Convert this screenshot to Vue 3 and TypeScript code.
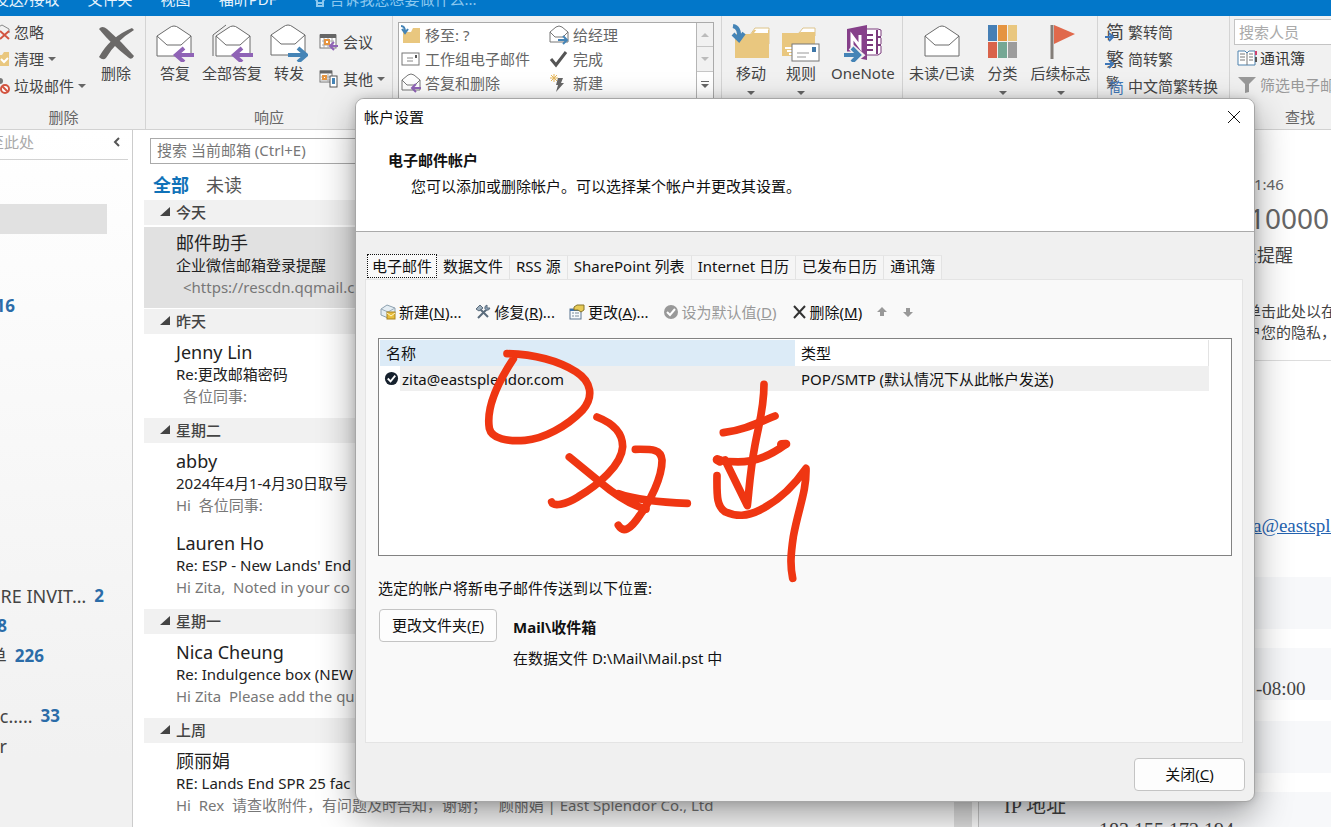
<script setup lang="ts">
interface Mail { from: string; subject: string; preview: string; selected?: boolean; indent?: boolean }
interface Day { label: string; mails: Mail[] }
interface Folder { name: string; count: string; end: number; kind: string }

const days: Day[] = [
  { label: '今天', mails: [{ from: '邮件助手', subject: '企业微信邮箱登录提醒', preview: '<https://rescdn.qqmail.com', selected: true, indent: true }] },
  { label: '昨天', mails: [{ from: 'Jenny Lin', subject: 'Re:更改邮箱密码', preview: '各位同事:', indent: true }] },
  {
    label: '星期二',
    mails: [
      { from: 'abby', subject: '2024年4月1-4月30日取号', preview: 'Hi  各位同事:' },
      { from: 'Lauren Ho', subject: "Re: ESP - New Lands' End", preview: 'Hi Zita,  Noted in your co' },
    ],
  },
  { label: '星期一', mails: [{ from: 'Nica Cheung', subject: 'Re: Indulgence box (NEW', preview: 'Hi Zita  Please add the qu' }] },
  { label: '上周', mails: [{ from: '顾丽娟', subject: 'RE: Lands End SPR 25 fac', preview: 'Hi  Rex  请查收附件，有问题及时告知，谢谢；   顾丽娟 | East Splendor Co., Ltd' }] },
]

const folders: Folder[] = [
  { name: '', count: '', end: 107, kind: 'current' },
  { name: '', count: '16', end: 15, kind: 'second' },
  { name: 'RE INVIT…', count: '2', end: 104, kind: 'third' },
  { name: '', count: '8', end: 7, kind: '' },
  { name: '单', count: '226', end: 44, kind: '' },
  { name: '', count: '', end: 44, kind: '' },
  { name: 'tc.....', count: '33', end: 60, kind: '' },
  { name: 'r', count: '', end: 7, kind: '' },
]

const tabs: string[] = ['电子邮件', '数据文件', 'RSS 源', 'SharePoint 列表', 'Internet 日历', '已发布日历', '通讯簿']

const tools = [
  { icon: 'i-new', text: '新建', key: 'N', dots: '...', off: false },
  { icon: 'i-repair', text: '修复', key: 'R', dots: '...', off: false },
  { icon: 'i-change', text: '更改', key: 'A', dots: '...', off: false },
  { icon: 'i-default', text: '设为默认值', key: 'D', dots: '', off: true },
  { icon: 'i-remove', text: '删除', key: 'M', dots: '', off: false },
]

const steps = [
  { icon: 'i-moveto', text: '移至: ?' },
  { icon: 'i-tomanager', text: '给经理' },
  { icon: 'i-team', text: '工作组电子邮件' },
  { icon: 'i-done', text: '完成' },
  { icon: 'i-replydel', text: '答复和删除' },
  { icon: 'i-create', text: '新建' },
]
</script>

<template>
  <div class="app">
    <svg class="defs" aria-hidden="true">
      <symbol id="i-env" viewBox="0 0 36 32">
        <path d="M1 31V11L13 3Q18 -1 23 3L35 11V31Z" fill="#fff" stroke="#6b6b6b" />
        <path d="M1 11L11 20H25L35 11" fill="none" stroke="#6b6b6b" />
      </symbol>
      <symbol id="i-env-small" viewBox="0 0 20 18">
        <path d="M1 17V7L7 2Q10 0 13 2L19 7V17Z" fill="#fff" stroke="#777" />
        <path d="M1 7L6 12H14L19 7" fill="none" stroke="#777" />
      </symbol>
      <symbol id="i-reply" viewBox="0 0 38 38">
        <use href="#i-env" x="0" y="1" width="36" height="32" />
        <path d="M38 31H22" stroke="#8f63b6" stroke-width="4" />
        <path d="M28 24L20 31L28 38" fill="none" stroke="#8f63b6" stroke-width="4" />
      </symbol>
      <symbol id="i-replyall" viewBox="0 0 42 38">
        <path d="M2 32V11L15 1" fill="none" stroke="#6b6b6b" />
        <use href="#i-env" x="4" y="1" width="36" height="32" />
        <path d="M42 31H25" stroke="#8f63b6" stroke-width="4" />
        <path d="M31 24L23 31L31 38" fill="none" stroke="#8f63b6" stroke-width="4" />
      </symbol>
      <symbol id="i-forward" viewBox="0 0 38 38">
        <use href="#i-env" x="0" y="0" width="36" height="32" />
        <path d="M18 31H35" stroke="#4584b6" stroke-width="4" />
        <path d="M28 24L36 31L28 38" fill="none" stroke="#4584b6" stroke-width="4" />
      </symbol>
      <symbol id="i-x" viewBox="0 0 38 36">
        <path d="M2 4Q5 0 10 4Q24 16 37 31Q35 35 32 33Q15 20 2 4Z" fill="#6b6968" />
        <path d="M37 5Q20 15 9 33Q6 36 2 32Q13 12 35 3Z" fill="#6b6968" />
      </symbol>
      <symbol id="i-folder" viewBox="0 0 40 38">
        <path d="M19 11L24 4H38V20" fill="#fffdf4" stroke="#ddc48c" />
        <path d="M4 10H20L23 6H38V34H4Z" fill="#e9c77f" />
        <path d="M23 9L26 5H37V9Z" fill="#fff" />
      </symbol>
      <symbol id="i-move" viewBox="0 0 40 38">
        <use href="#i-folder" width="40" height="38" />
        <path d="M2 2Q9 3 8 15" fill="none" stroke="#4584b6" stroke-width="4" />
        <path d="M2 10L8 16L13 9" fill="none" stroke="#4584b6" stroke-width="4" />
      </symbol>
      <symbol id="i-rules" viewBox="0 0 40 38">
        <path d="M18 9L22 4H34V12" fill="#fff" stroke="#ddc48c" />
        <path d="M1 9H17L20 8H34V32H1Z" fill="#e9c77f" />
        <path d="M4 24h7M6 27h5M8 30h3" stroke="#fff" stroke-width="2" />
        <rect x="11" y="20" width="27" height="17" fill="#fff" stroke="#777" />
        <path d="M16 29h12M16 33h9" stroke="#999" />
        <rect x="31" y="23" width="4" height="5" fill="#3f77a8" />
      </symbol>
      <symbol id="i-onenote" viewBox="0 0 40 38">
        <path d="M20 5H35L38 6V12L37 13L38 14V20L37 21L38 22V29L35 31H20Z" fill="#fff" stroke="#7b3a7c" />
        <path d="M22 11h8M22 16h8M22 21h8M22 26h8M34 6v24M34 13h4M34 21h4" stroke="#7b3a7c" stroke-width="2" />
        <path d="M4 5L24 1V36L4 32Z" fill="#86408a" />
        <path d="M9 24V12L17 23V11" fill="none" stroke="#fff" stroke-width="3" />
        <path d="M1 31H15M8 23L17 31L8 38" fill="none" stroke="#f1f1f1" stroke-width="7" />
        <path d="M1 31H14M9 24L16 31L9 38" fill="none" stroke="#4584b6" stroke-width="4" />
      </symbol>
      <symbol id="i-unread" viewBox="0 0 38 38"><use href="#i-env" x="1" y="1" width="36" height="32" /></symbol>
      <symbol id="i-cats" viewBox="0 0 38 38">
        <rect x="4" y="1" width="9" height="16" fill="#467fb5" /><rect x="14" y="1" width="9" height="16" fill="#e59440" /><rect x="24" y="1" width="9" height="16" fill="#e9c77f" />
        <rect x="4" y="18" width="9" height="16" fill="#d9634a" /><rect x="14" y="18" width="9" height="16" fill="#75a794" /><rect x="24" y="18" width="9" height="16" fill="#9c9c9c" />
      </symbol>
      <symbol id="i-flag" viewBox="0 0 38 38"><path d="M10 1V35" stroke="#837d78" stroke-width="3" /><path d="M12 1L33 10L12 20Z" fill="#e0694c" /></symbol>
      <symbol id="i-ignore" viewBox="0 0 16 16"><path d="M1 5L8 1L15 5V9M3 4V14" fill="none" stroke="#888" /><path d="M6 7L15 15M15 7L6 15" stroke="#d25440" stroke-width="2" /></symbol>
      <symbol id="i-clean" viewBox="0 0 16 16"><path d="M2 4H8L10 1H15V15H2Z" fill="#e9c77f" /><path d="M7 8L10 11L14 7" fill="none" stroke="#fff" stroke-width="2" /></symbol>
      <symbol id="i-junk" viewBox="0 0 16 18"><circle cx="6" cy="4" r="3" fill="#777" /><circle cx="11" cy="12" r="4" fill="#fff" stroke="#d25440" stroke-width="2" /><path d="M8 9L14 15" stroke="#d25440" stroke-width="2" /></symbol>
      <symbol id="i-meet" viewBox="0 0 20 18">
        <rect x="1" y="2" width="16" height="13" fill="#fff" stroke="#777" /><path d="M1 3H17" stroke="#666" stroke-width="4" /><path d="M3 8H15M3 12H15M5 5V15M9 5V15M13 5V15" stroke="#aaa" /><rect x="6" y="7" width="4" height="4" fill="#fff" stroke="#e59440" stroke-width="2" />
        <path d="M19 13H12M15 9L11 13L15 17" fill="none" stroke="#8f63b6" stroke-width="2" />
      </symbol>
      <symbol id="i-other" viewBox="0 0 20 18">
        <rect x="1" y="1" width="12" height="11" fill="#fff" stroke="#777" /><path d="M1 2H13" stroke="#666" stroke-width="3" /><path d="M2 7H12M2 10H12M9 4V12" stroke="#aaa" /><rect x="4" y="6" width="3" height="3" fill="#fff" stroke="#e59440" stroke-width="2" />
        <rect x="11" y="6" width="7" height="11" fill="#fff" stroke="#555" /><rect x="13" y="8" width="3" height="6" fill="#4584b6" />
      </symbol>
      <symbol id="i-moveto" viewBox="0 0 20 20"><path d="M2 7H10L12 3H19V18H2Z" fill="#e9c77f" /><path d="M0 1Q4 1 4 7M1 4L4 8L7 4" fill="none" stroke="#4584b6" stroke-width="2" /></symbol>
      <symbol id="i-team" viewBox="0 0 20 20"><rect x="1" y="4" width="17" height="12" fill="#fff" stroke="#777" /><path d="M6 9h6M6 12h6" stroke="#888" /><path d="M14 6h2v3h-2z" fill="#555" /></symbol>
      <symbol id="i-replydel" viewBox="0 0 20 20"><use href="#i-env-small" x="0" y="0" width="20" height="18" /><path d="M20 15H12M15 11L11 15L15 19" fill="none" stroke="#8f63b6" stroke-width="2" /></symbol>
      <symbol id="i-tomanager" viewBox="0 0 20 20"><use href="#i-env-small" x="0" y="0" width="20" height="18" /><path d="M9 15H17M14 11L18 15L14 19" fill="none" stroke="#4584b6" stroke-width="2" /></symbol>
      <symbol id="i-done" viewBox="0 0 20 20"><path d="M2 10L7 16L17 3" fill="none" stroke="#555" stroke-width="3" /></symbol>
      <symbol id="i-create" viewBox="0 0 20 20"><path d="M5 1V9M1 5H9M2 2L8 8M8 2L2 8" stroke="#e5b65a" /><path d="M9 5H14L12 10H15L7 19L9 12H7Z" fill="#666" /></symbol>
      <symbol id="i-book" viewBox="0 0 20 18"><path d="M1 2H8L10 4L12 2H18V16H1Z" fill="#fff" stroke="#4d81ad" /><path d="M3 5h5M3 8h5M3 11h5M12 5h4M12 8h4M12 11h4M10 4V16" stroke="#777" /><path d="M19 2v4" stroke="#d04070" stroke-width="2" /><path d="M19 8v5" stroke="#555" stroke-width="2" /></symbol>
      <symbol id="i-filter" viewBox="0 0 20 18"><path d="M1 1H19L12 8V16L8 17V8Z" fill="#999" /></symbol>
      <symbol id="i-new" viewBox="0 0 16 16"><path d="M1 5L7 1L15 4V9L8 14L1 11Z" fill="#e4edf3" stroke="#8da1b0" /><path d="M1 5L8 8L15 4M8 8V14" fill="none" stroke="#9babb8" /><rect x="7" y="8" width="8" height="7" fill="#e8bd3c" stroke="#a98321" /><path d="M7 9L11 12L15 9" fill="none" stroke="#fff5c7" /></symbol>
      <symbol id="i-repair" viewBox="0 0 16 16"><path d="M3 14L12 5M5 5L13 13" stroke="#5b6c7c" stroke-width="2" /><path d="M1 5L5 1L8 4L4 7Z" fill="#9eafbd" stroke="#5b6c7c" /><path d="M10 5Q9 2 12 1L12 4L15 4Q14 7 11 6" fill="#8fa6bd" stroke="#5b6c7c" /></symbol>
      <symbol id="i-change" viewBox="0 0 16 16"><rect x="1" y="5" width="11" height="10" fill="#f6fafc" stroke="#5a7590" /><path d="M1 6H12" stroke="#3e73ad" stroke-width="2" /><path d="M3 9h2M3 12h2M6 9h4M6 12h4" stroke="#7a8c9b" /><path d="M5 3L8 1H15V6L12 8L9 6H5Z" fill="#e7ca55" stroke="#86752c" /></symbol>
      <symbol id="i-default" viewBox="0 0 16 16"><circle cx="8" cy="8" r="7" fill="#999" /><path d="M4 8L7 11L12 5" fill="none" stroke="#fff" stroke-width="2" /></symbol>
      <symbol id="i-remove" viewBox="0 0 16 16"><path d="M3 2L14 14M14 2L3 14" stroke="#333" stroke-width="2" /></symbol>
    </svg>

    <nav class="menu">
      <a href="#">发送/接收</a><a href="#">文件夹</a><a href="#">视图</a><a href="#">福昕PDF</a>
      <a href="#" class="tell">
        <svg width="12" height="20" viewBox="0 0 12 20"><path d="M3 12Q1 10 1 7A5 5 0 0 1 11 7Q11 10 9 12V17H3ZM3 14H9" fill="none" stroke="#8cc8ef" stroke-width="2" /></svg>告诉我您想要做什么...
      </a>
    </nav>

    <header class="ribbon">
      <section class="group g-del">
        <div class="tools">
          <div class="stack">
            <button class="small"><svg width="16" height="16"><use href="#i-ignore" /></svg>忽略</button>
            <button class="small"><svg width="16" height="16"><use href="#i-clean" /></svg>清理<i class="caret"></i></button>
            <button class="small"><svg width="16" height="18"><use href="#i-junk" /></svg>垃圾邮件<i class="caret"></i></button>
          </div>
          <button class="big"><svg width="38" height="36"><use href="#i-x" /></svg>删除</button>
        </div>
        <h2>删除</h2>
      </section>
      <section class="group g-resp">
        <div class="tools">
          <button class="big"><svg width="38" height="38"><use href="#i-reply" /></svg>答复</button>
          <button class="big"><svg width="42" height="38"><use href="#i-replyall" /></svg>全部答复</button>
          <button class="big"><svg width="38" height="38"><use href="#i-forward" /></svg>转发</button>
          <div class="stack two">
            <button class="small"><svg width="20" height="18"><use href="#i-meet" /></svg>会议</button>
            <button class="small"><svg width="20" height="18"><use href="#i-other" /></svg>其他<i class="caret"></i></button>
          </div>
        </div>
        <h2>响应</h2>
      </section>
      <section class="group g-steps">
        <div class="steps">
          <div class="step-grid">
            <button v-for="s in steps" :key="s.text" class="small"><svg width="20" height="20"><use :href="'#' + s.icon" /></svg>{{ s.text }}</button>
          </div>
          <div class="spin">
            <button aria-label="上一行"><i class="caret up"></i></button>
            <button aria-label="下一行"><i class="caret pale"></i></button>
            <button aria-label="更多" class="more"><i class="caret"></i></button>
          </div>
        </div>
      </section>
      <section class="group g-move">
        <div class="tools">
          <button class="big"><svg width="40" height="38"><use href="#i-move" /></svg>移动<i class="caret"></i></button>
          <button class="big"><svg width="40" height="38"><use href="#i-rules" /></svg>规则<i class="caret"></i></button>
          <button class="big"><svg width="40" height="38"><use href="#i-onenote" /></svg>OneNote</button>
        </div>
      </section>
      <section class="group g-tags">
        <div class="tools">
          <button class="big"><svg width="38" height="38"><use href="#i-unread" /></svg>未读/已读</button>
          <button class="big"><svg width="38" height="38"><use href="#i-cats" /></svg>分类<i class="caret"></i></button>
          <button class="big"><svg width="38" height="38"><use href="#i-flag" /></svg>后续标志<i class="caret"></i></button>
        </div>
      </section>
      <section class="group g-conv">
        <div class="stack">
          <button class="small"><span class="han">简<svg width="10" height="9" viewBox="0 0 10 9"><path d="M0 4H8M4 0L8 4L4 8" fill="none" stroke="#3f77b8" stroke-width="2" /></svg></span>繁转简</button>
          <button class="small"><span class="han">繁<svg width="10" height="9" viewBox="0 0 10 9"><path d="M0 4H8M4 0L8 4L4 8" fill="none" stroke="#3f77b8" stroke-width="2" /></svg></span>简转繁</button>
          <button class="small"><span class="han pair"><i>繁</i><b>简</b></span>中文简繁转换</button>
        </div>
      </section>
      <section class="group g-find">
        <div class="stack">
          <input type="text" placeholder="搜索人员" aria-label="搜索人员" />
          <button class="small dark"><svg width="20" height="18"><use href="#i-book" /></svg>通讯簿</button>
          <button class="small dim"><svg width="20" height="18"><use href="#i-filter" /></svg>筛选电子邮件</button>
        </div>
        <h2>查找</h2>
      </section>
    </header>

    <main class="body">
      <aside class="folders">
        <div class="fav"><span>至此处</span><svg width="7" height="10" viewBox="0 0 7 10"><path d="M6 1L2 5L6 9" fill="none" stroke="#555" stroke-width="2" /></svg></div>
        <div v-for="(f, i) in folders" :key="i" class="folder" :class="f.kind" :style="{ width: f.end + 'px' }">
          <span v-if="f.name">{{ f.name }}</span><b v-if="f.count">{{ f.count }}</b>
        </div>
      </aside>

      <section class="list">
        <input class="search" type="text" placeholder="搜索 当前邮箱 (Ctrl+E)" aria-label="搜索当前邮箱" />
        <div class="filters"><button class="on">全部</button><button>未读</button></div>
        <template v-for="d in days" :key="d.label">
          <h3><svg width="10" height="10" viewBox="0 0 10 10"><path d="M10 0V9H0Z" fill="#444" /></svg>{{ d.label }}</h3>
          <article v-for="m in d.mails" :key="m.from" :class="{ selected: m.selected }">
            <strong>{{ m.from }}</strong>
            <span>{{ m.subject }}</span>
            <p :class="{ indent: m.indent }">{{ m.preview }}</p>
          </article>
        </template>
        <div class="scroll"></div>
      </section>

      <section class="reader">
        <div class="head">
          <time>1:46</time>
          <div class="sender">10000</div>
          <div class="subject">录提醒</div>
          <p>单击此处以在</p>
          <p>户您的隐私，</p>
        </div>
        <a class="mailto" href="#">a@eastsplendor.com</a>
        <div class="band"></div>
        <div class="band"></div>
        <div class="zone">-08:00</div>
        <div class="band"></div>
        <div class="band last"><span>IP 地址</span><span class="ip">183.155.172.194</span></div>
      </section>
    </main>

    <div class="dialog" role="dialog" aria-labelledby="dlg-title">
      <div class="top">
        <div class="title"><span id="dlg-title">帐户设置</span><button class="close" aria-label="关闭窗口"><svg width="14" height="14" viewBox="0 0 14 14"><path d="M1 1L13 13M13 1L1 13" stroke="#111" /></svg></button></div>
        <h1>电子邮件帐户</h1>
        <p>您可以添加或删除帐户。可以选择某个帐户并更改其设置。</p>
      </div>
      <div class="tabs" role="tablist">
        <button v-for="(t, i) in tabs" :key="t" role="tab" :aria-selected="i === 0" :class="{ active: i === 0 }">{{ t }}</button>
      </div>
      <div class="panel">
        <div class="bar">
          <button v-for="t in tools" :key="t.key" :disabled="t.off"><svg width="16" height="16"><use :href="'#' + t.icon" /></svg><span>{{ t.text }}(<u>{{ t.key }}</u>){{ t.dots }}</span></button>
          <button class="arrow" aria-label="上移" disabled><svg width="10" height="10" viewBox="0 0 10 10"><path d="M5 0L10 5H7V9H3V5H0Z" fill="#999" /></svg></button>
          <button class="arrow" aria-label="下移" disabled><svg width="10" height="10" viewBox="0 0 10 10"><path d="M5 10L10 5H7V1H3V5H0Z" fill="#999" /></svg></button>
        </div>
        <div class="accounts">
          <table>
            <colgroup><col class="c-mark" /><col class="c-name" /><col class="c-type" /></colgroup>
            <thead><tr><th class="name" colspan="2">名称</th><th>类型</th></tr></thead>
            <tbody>
              <tr>
                <td class="mark"><svg width="15" height="15" viewBox="0 0 16 16"><circle cx="8" cy="8" r="7" fill="#17222e" /><path d="M4 8L7 11L12 5" fill="none" stroke="#fff" stroke-width="2" /></svg></td>
                <td class="mail">zita@eastsplendor.com</td><td class="type">POP/SMTP (默认情况下从此帐户发送)</td>
              </tr>
            </tbody>
          </table>
        </div>
        <p class="note">选定的帐户将新电子邮件传送到以下位置:</p>
        <div class="place">
          <button class="btn wide">更改文件夹(<u>F</u>)</button>
          <div><b>Mail\收件箱</b><span>在数据文件 D:\Mail\Mail.pst 中</span></div>
        </div>
      </div>
      <div class="foot"><button class="btn">关闭(<u>C</u>)</button></div>
      <svg class="ink" viewBox="0 0 1080 780" aria-hidden="true">
        <path d="M111 56C190 58 260 75 318 110C365 140 372 185 338 225C290 275 220 312 165 316C115 320 65 312 58 280C48 220 85 140 130 72" />
        <path d="M381 246C430 265 458 295 458 335C455 390 385 450 325 485C285 510 250 515 245 501" />
        <path d="M298 366L385 437C430 475 480 510 528 522M445 476C500 495 560 502 652 505" />
        <path d="M496 343C550 342 573 343 576 375C577 425 540 500 510 540C480 585 460 595 445 571" />
        <path d="M882 148C882 220 868 260 855 330C840 410 838 460 832 512L765 375" />
        <path d="M760 293C820 285 860 265 915 243M742 374C810 388 870 385 947 328" />
        <path d="M934 328L948 327" stroke-width="26" /><path d="M742 374L750 378" stroke-width="28" />
        <path d="M741 422C740 490 742 515 765 530C800 545 830 545 870 525C930 495 970 455 1008 400C1010 470 985 520 970 605C962 660 960 690 968 730" />
      </svg>
    </div>
  </div>
</template>

<style>
body { margin: 0; overflow: hidden; }
</style>

<style scoped>
* { box-sizing: border-box; }
.app {
  position: relative; height: 100vh; overflow: hidden; display: flex; flex-direction: column;
  font: 15px/22px "Noto Sans", "Noto Sans CJK SC", sans-serif; color: #444; background: #fff; white-space: nowrap;
}
.defs { position: absolute; width: 0; height: 0; }
button { font: inherit; color: inherit; background: none; border: 0; padding: 0; white-space: nowrap; }
svg { flex: none; display: block; }
h1, h2, h3, p { margin: 0; font-size: 15px; font-weight: 400; }

.menu { flex: none; height: 16px; overflow: hidden; background: #0277c9; display: flex; align-items: flex-end; gap: 28px; padding-bottom: 6px; margin-left: -6px; }
.menu a { color: #e8f4fd; text-decoration: none; flex: none; }
.menu .tell { color: #8cc8ef; display: flex; align-items: center; gap: 3px; margin-left: 10px; }

.ribbon { flex: none; display: grid; grid-template-columns: 146px 247px 329px 181px 195px 132px minmax(0, 1fr); height: 114px; background: #f1f1f1; border-bottom: 1px solid #d2d2d2; }
.group { position: relative; display: flex; flex-direction: column; justify-content: space-between; padding: 4px 0 1px; border-right: 1px solid #d4d4d4; min-width: 0; overflow: hidden; }
.group:last-child { border-right: 0; }
.group h2 { text-align: center; color: #666; }
.tools { display: flex; }
.stack { display: flex; flex-direction: column; margin-top: -2px; }
.small { display: flex; align-items: center; height: 27px; gap: 4px; }
.big { display: flex; flex-direction: column; align-items: center; min-width: 38px; padding-top: 4px; }
.big svg { height: 38px; }
.big .caret { margin-top: 7px; }
.caret { border: 4px solid transparent; border-top-color: #666; border-bottom: 0; }
.caret.up { border-bottom: 4px solid #bbb; border-top: 0; }
.caret.pale { border-top-color: #bbb; }
.g-del .stack { margin-left: -6px; width: 103px; }
.g-del h2 { padding-right: 18px; }
.g-resp .tools { padding-left: 10px; gap: 8px; }
.two { gap: 10px; padding: 10px 0 0 3px; }
.g-steps { padding: 6px 7px 30px 5px; }
.steps { display: flex; height: 77px; border: 1px solid #aaa; background: #fff; }
.step-grid { flex: 1; display: grid; grid-template-columns: 148px 1fr; padding: 0 2px; align-content: start; color: #666; }
.step-grid .small { height: 24px; }
.spin { width: 17px; display: grid; border-left: 1px solid #b5b5b5; background: #f1f1f1; }
.spin button { display: flex; flex-direction: column; align-items: center; justify-content: center; border-bottom: 1px solid #c5c5c5; }
.spin .more { background: #fff; border-bottom: 0; gap: 2px; }
.spin .more::before { content: ""; width: 8px; height: 1px; background: #666; }
.g-move .tools { padding-left: 9px; gap: 10px; }
.g-tags .tools { padding-left: 6px; gap: 9px; }
.g-conv { padding-left: 8px; }
.han { position: relative; width: 18px; font-size: 18px; }
.han svg { position: absolute; left: -1px; bottom: 1px; }
.pair { display: grid; }
.pair i, .pair b { grid-area: 1 / 1; font-style: normal; font-weight: 400; }
.pair i { font-size: 13px; line-height: 16px; text-align: left; }
.pair b { color: #3f77b8; font-size: 15px; text-align: right; padding-top: 2px; }
.g-find { padding-left: 4px; padding-top: 5px; }
.g-find input { height: 26px; border: 1px solid #c4c4c4; border-right: 0; font: inherit; padding: 0 4px; width: 100%; background: #fff; outline: 0; }
.g-find .small { padding-left: 3px; gap: 3px; }
.g-find .dark { height: 26px; }
.g-find h2 { text-align: left; padding-left: 51px; }
input::placeholder { color: #aaa; opacity: 1; }
.dark { color: #333; }
.dim { color: #999; }

.body { flex: 1; min-height: 0; display: grid; grid-template-columns: 133px minmax(0, 846fr) minmax(0, 352fr); }
.folders { overflow: hidden; background: linear-gradient(#fff, #f1f1f1 90%); border-right: 1px solid #ccc; }
.fav { height: 30px; margin-right: 4px; padding-right: 8px; border-bottom: 1px solid #d2d2d2; color: #aaa; display: flex; align-items: center; justify-content: space-between; margin-bottom: 44px; padding-bottom: 6px; }
.fav span { margin-left: -11px; }
.folder { height: 30px; display: flex; justify-content: flex-end; align-items: center; font-size: 18px; gap: 8px; }
.folder b { color: #2b6ca8; font-size: 17px; }
.folder.current { background: #e1e1e1; }
.folder.second { margin-top: 57px; }
.folder.third { margin-top: 260px; }

.list { position: relative; padding-left: 11px; overflow: hidden; border-right: 1px solid #c8c8c8; }
.search { display: block; width: calc(100% - 30px); height: 26px; margin: 8px 0 0 6px; border: 1px solid #aaa; padding: 0 6px 2px; font: inherit; outline: 0; }
.search::placeholder { color: #777; }
.filters { height: 36px; padding: 6px 0 0 9px; display: flex; gap: 17px; font-size: 18px; color: #555; align-items: center; }
.filters .on { color: #1072b8; font-weight: 700; }
.list h3 { height: 25px; margin: 0 26px 2px 0; padding: 0 0 2px 16px; display: flex; align-items: center; gap: 6px; background: #f1f1f1; font-weight: 500; }
.list article { height: 82px; padding: 5px 0 0 32px; margin-right: 26px; }
.list article.selected { background: #e1e1e1; height: 81px; margin-bottom: 1px; }
.list strong { display: block; font-size: 18px; font-weight: 400; color: #222; }
.list span { display: block; color: #222; }
.list p { color: #777; white-space: pre; }
.list p.indent { padding-left: 7px; }
.scroll { position: absolute; right: 6px; top: 0; bottom: 0; width: 18px; background: #e2e2e2; }

.reader { overflow: hidden; background: #fff; }
.head { height: 231px; padding: 43px 0 0 267px; border-bottom: 1px solid #ddd; }
.head time { display: block; padding-left: 8px; color: #666; }
.sender { font-size: 28px; line-height: 46px; color: #666; padding-left: 3px; }
.subject { font-size: 18px; line-height: 28px; margin-left: -7px; margin-bottom: 32px; }
.head p { line-height: 21px; }
.mailto { display: block; padding-left: 274px; margin-top: 154px; margin-bottom: 40px; font: 19px/22px "Liberation Serif", "Noto Sans CJK SC", serif; color: #2563b0; }
.band { height: 52px; background: #f7f8fa; margin-bottom: 19px; }
.zone { height: 22px; margin-top: -41px; margin-bottom: 21px; padding-left: 277px; font: 19px/22px "Liberation Serif", serif; position: relative; }
.last { height: 60px; padding: 2px 0 0 25px; font: 20px/24px "Liberation Serif", "Noto Sans CJK SC", serif; }
.last span { display: block; }
.last .ip { padding-left: 95px; }

.dialog {
  position: absolute; left: 355px; right: 76px; top: 98px; bottom: 25px; display: flex; flex-direction: column; overflow: visible;
  background: #f0f0f0; border: 1px solid #a6a6a6; border-radius: 9px; color: #111; box-shadow: 0 14px 36px rgba(0, 0, 0, .38), 0 0 10px rgba(0, 0, 0, .15);
}
.top { height: 133px; background: #fff; border-bottom: 1px solid #aaa; border-radius: 8px 8px 0 0; }
.title { display: flex; justify-content: space-between; align-items: center; height: 36px; padding: 0 13px 0 8px; }
.close { display: flex; }
.top h1 { font-weight: 700; padding: 14px 0 0 32px; }
.top p { padding: 4px 0 0 55px; }
.tabs { display: flex; align-items: flex-end; padding: 22px 0 0 11px; height: 47px; }
.tabs button { height: 24px; padding: 0 6px 2px; border-top: 1px solid #e6e6e6; border-right: 1px solid #e3e3e3; background: #f5f5f5; line-height: 21px; }
.tabs .active { border: 1px dotted #111; background: #f9f9f9; padding: 0 4px; margin-bottom: 1px; }
.panel { flex: 1; margin: 0 11px 0 9px; background: #f9f9f9; border: 1px solid #e4e4e4; padding: 21px 10px 0 12px; }
.bar { display: flex; align-items: center; gap: 14px; height: 22px; padding-left: 2px; }
.bar button { display: flex; align-items: center; gap: 3px; color: #111; }
.bar button:disabled { color: #999; }
.bar .arrow { padding: 0 1px; }
.accounts { height: 218px; margin-top: 15px; background: #fff; border: 1px solid #828282; padding: 1px 22px 0 1px; }
table { width: 100%; border-collapse: collapse; table-layout: fixed; }
.c-mark { width: 20px; }
.c-name { width: 395px; }
th, td { text-align: left; font-weight: 400; padding: 0; height: 25px; line-height: 22px; }
th { border-right: 1px solid #e3e3e3; padding-left: 6px; height: 26px; }
th.name { background: #dcebf7; padding-left: 6px; border: 0; }
td { background: #efefef; }
td.mark { background: #fff; padding-left: 4px; }
td.mail { padding-left: 2px; }
td.type { padding-left: 6px; }
.note { padding-top: 21px; }
.place { display: flex; gap: 16px; padding: 10px 0 0 1px; }
.place b, .place span { display: block; }
.place b { margin: 7px 0 9px; }
.btn { height: 33px; border: 1px solid #c4c4c4; border-radius: 4px; background: #fdfdfd; min-width: 111px; padding: 0 11px 2px; color: #111; }
.btn.wide { min-width: 118px; }
.foot { display: flex; justify-content: flex-end; padding: 15px 9px 10px 0; }
.ink { position: absolute; left: 114px; top: 236px; width: 360px; height: 260px; fill: none; stroke: #ef3612; stroke-width: 23; stroke-linecap: round; stroke-linejoin: round; pointer-events: none; }
</style>
